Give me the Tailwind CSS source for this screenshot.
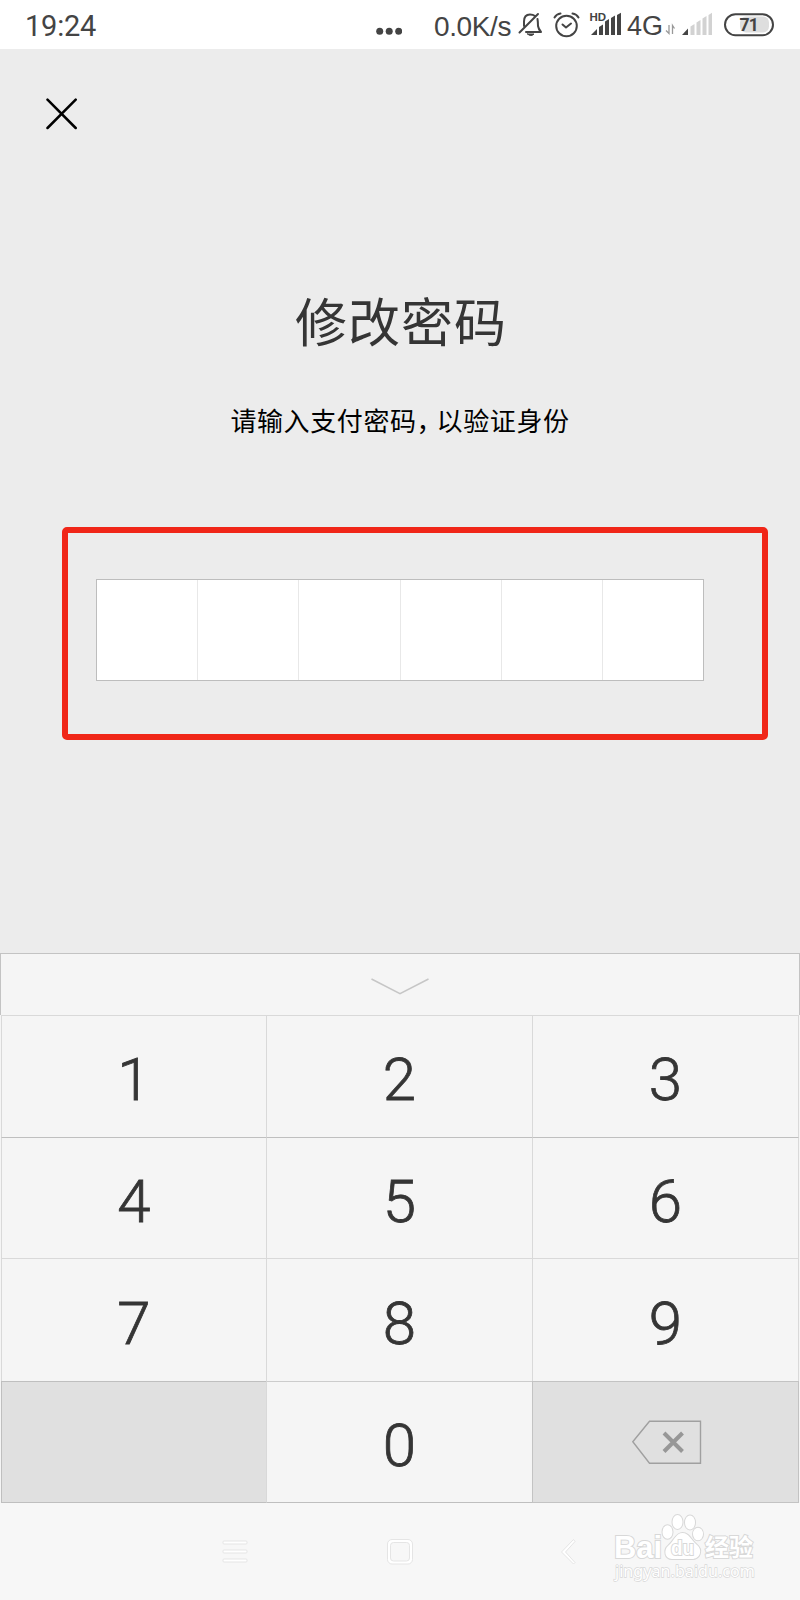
<!DOCTYPE html>
<html lang="zh-CN">
<head>
<meta charset="UTF-8">
<title>修改密码</title>
<script src="https://cdn.jsdelivr.net/npm/@tailwindcss/browser@4"></script>
</head>
<body class="w-[800px] h-[1600px] overflow-hidden bg-[#ececec] flex flex-col font-['Roboto','Noto_Sans_CJK_SC',sans-serif] text-[#353535]">
  <!-- status bar -->
  <header class="h-[49px] shrink-0 bg-white flex items-center pl-[25px] text-[#444] whitespace-nowrap">
    <span class="w-[351px] text-[29px] leading-none pt-[4px] tracking-[-0.2px]">19:24</span>
    <svg class="w-[26px] h-[49px] mr-[32px] shrink-0" viewBox="0 0 26 49" fill="#444"><circle cx="3.7" cy="31.3" r="3.5"/><circle cx="13.2" cy="31.3" r="3.5"/><circle cx="22.7" cy="31.3" r="3.5"/></svg>
    <span class="w-[83px] shrink-0 text-[28px] leading-none pt-[4px] font-['Liberation_Sans',sans-serif] tracking-[-0.4px]">0.0K/s</span>
    <!-- silent, alarm, SIM 1 -->
    <svg class="w-[110px] h-[49px] shrink-0" viewBox="517 0 110 49" fill="none" stroke="#444" stroke-width="2" stroke-linecap="round" stroke-linejoin="round">
      <path d="M519.500 32.500 538 14M524 26V21.500Q524 14.500 530 14.500Q533 14.500 535 16M537.500 19Q538 22 538 26Q538.500 29 541 32H526"/>
      <path d="M527.500 34H534Q531 37.200 527.500 34Z" fill="#444" stroke-width="1"/>
      <circle cx="566.500" cy="26" r="10.300" stroke-width="2"/><path d="M562.500 24.500 566 27.500 571 23.500M554.500 17.500Q556.500 14 560.500 13.500M572.500 13.500Q576.500 14 578.500 17.500"/>
      <text x="589.500" y="21" font-size="11.500" font-family="Liberation Sans" font-weight="700" fill="#444" stroke="none">HD</text>
      <g fill="#444" stroke="none"><path d="M591 35 597 29V35Z"/><path d="M599 27 603 24.500V35H599Z"/><path d="M605 21.500 609 19V35H605Z"/><path d="M611 18 615 15.500V35H611Z"/><path d="M617 15 621 12.700V35H617Z"/></g>
    </svg>
    <span class="w-[38px] shrink-0 text-[27px] leading-none pt-[4px] font-['Liberation_Sans',sans-serif]">4G</span>
    <!-- traffic, SIM 2, battery -->
    <svg class="w-[115px] h-[49px] shrink-0" viewBox="665 0 115 49">
      <path d="M669 25V33.500L666 30.500M672.500 34V25.500L674.500 28.500" fill="none" stroke="#999" stroke-width="1.300"/>
      <path d="M682 35 688 28.500V35Z" fill="#444"/>
      <g fill="#d2d2d2"><path d="M690.500 26.500 694.500 24V35H690.500Z"/><path d="M696.500 22.500 700.500 20V35H696.500Z"/><path d="M702.500 18.500 706.500 16V35H702.500Z"/><path d="M708.500 15 712 12.700V35H708.500Z"/></g>
      <rect x="740" y="16.500" width="29" height="16" rx="6" fill="#dedede"/>
      <rect x="725" y="14.200" width="48" height="21" rx="10.500" fill="none" stroke="#444" stroke-width="2"/>
      <text x="748.800" y="31" font-size="17.500" font-weight="700" text-anchor="middle" fill="#444" font-family="Roboto" letter-spacing="-0.7">71</text>
    </svg>
  </header>

  <main class="h-[904px] shrink-0 flex flex-col">
    <svg class="w-[32px] h-[32px] mt-[49px] ml-[46px] shrink-0" viewBox="0 0 32 32" fill="none" stroke="#000" stroke-width="2.500" stroke-linecap="round"><path d="M1.500 1.700 29.700 30M29.700 1.700 1.500 30"/></svg>
    <h1 class="mt-[158px] h-[64px] pl-[2px] text-center text-[52px] leading-[64px] tracking-[1px] font-['Noto_Sans_CJK_SC',sans-serif]">修改密码</h1>
    <p class="mt-[51px] h-[34px] flex justify-center text-[26px] leading-[34px] tracking-[0.6px] text-black font-['Noto_Sans_CJK_SC',sans-serif]"><span>请输入支付密码</span><span class="w-[20px] [font-feature-settings:'halt']">，</span><span>以验证身份</span></p>
    <div class="mt-[90px] ml-[62px] w-[706px] h-[213px] border-[6px] border-[#f02618] rounded-[5px] pt-[46px] pl-[28px]">
      <div class="w-[608px] h-[102px] bg-white border border-[#bdbdbd] grid grid-cols-[101px_101px_102px_101px_101px_100px] divide-x divide-[#e8e8e8]">
        <div></div><div></div><div></div><div></div><div></div><div></div>
      </div>
    </div>
  </main>

  <!-- number pad -->
  <section class="h-[550px] shrink-0 bg-[#f5f5f5] flex flex-col">
    <div class="h-[62px] shrink-0 border border-b-0 border-[#c3c3c3] flex justify-center">
      <svg class="w-[60px] h-[60px]" viewBox="370 954 60 60" fill="none" stroke="#c6c6c6" stroke-width="1.500"><path d="M371.500 979 400 993.700 428.500 979"/></svg>
    </div>
    <div class="mx-px grow grid grid-cols-[265px_266px_267px] grid-rows-[122px_121px_123px_122px] text-[60px] font-light [-webkit-text-stroke:0.8px_#353535] leading-none *:flex *:items-center *:justify-center *:border-[#d9d9d9] *:border-l *:border-t *:pt-[7px]">
      <div>1</div><div>2</div><div class="border-r">3</div>
      <div class="border-t-[#bfbfbf]!">4</div><div class="border-t-[#bfbfbf]!">5</div><div class="border-r border-t-[#bfbfbf]!">6</div>
      <div>7</div><div>8</div><div class="border-r">9</div>
      <div class="bg-[#e0e0e0] border-[#bfbfbf]! border-b"></div>
      <div class="border-b border-b-[#bfbfbf]! border-t-[#cccccc]!">0</div>
      <div class="bg-[#e0e0e0] border-[#c3c3c3]! border-b border-r pt-0!">
        <svg class="w-[72px] h-[46px]" viewBox="630 1419 72 46" fill="none" stroke="#a0a0a0"><path d="M632.800 1441.800 649.500 1421.300H700.500V1463.300H649.500Z" stroke-width="1.400"/><path d="M664 1433 682.500 1451.500M682.500 1433 664 1451.500" stroke="#979797" stroke-width="4"/></svg>
      </div>
    </div>
  </section>

  <!-- navigation -->
  <footer class="grow bg-[#f7f7f7]">
    <svg class="w-[800px] h-[97px]" viewBox="0 1503 800 97" fill="#fff" stroke="#e5e5e5" stroke-width="1">
      <rect x="223" y="1541" width="24" height="3" rx="1"/><rect x="223" y="1550" width="24" height="3" rx="1"/><rect x="223" y="1559" width="24" height="3" rx="1"/>
      <rect x="387.500" y="1539.500" width="25" height="24.500" rx="4.500"/><rect x="390.500" y="1542.500" width="19" height="18.500" rx="3" fill="#f7f7f7"/>
      <path d="M573.500 1539.500 561.500 1552 573.500 1564 575 1562.500 565.500 1552 575 1541.500Z"/>
      <g stroke="#d8d8d8" stroke-width="2" paint-order="stroke">
        <text x="614" y="1558" font-family="Liberation Sans" font-weight="700" font-size="31" textLength="48" lengthAdjust="spacingAndGlyphs">Bai</text>
        <ellipse cx="667.500" cy="1532" rx="5" ry="6.800"/><ellipse cx="677.500" cy="1522" rx="5" ry="7"/><ellipse cx="690" cy="1522.500" rx="5" ry="7"/><ellipse cx="698" cy="1534" rx="5" ry="6.300"/>
        <path d="M682.500 1533C676 1533 674 1541 668.500 1545.500C663 1550 665 1559 672 1559H692C700 1559 703 1550 697 1545C691 1540 689 1533 682.500 1533Z"/>
        <text x="671" y="1555" font-family="Liberation Sans" font-weight="700" font-size="20" textLength="23" lengthAdjust="spacingAndGlyphs">du</text>
        <text x="705" y="1556" font-family="Noto Sans CJK SC" font-weight="700" font-size="24" textLength="48">经验</text>
        <text x="615" y="1577" font-family="Noto Sans" font-size="17" stroke-width="1.400" textLength="140" lengthAdjust="spacingAndGlyphs">jingyan.baidu.com</text>
      </g>
    </svg>
  </footer>
</body>
</html>
